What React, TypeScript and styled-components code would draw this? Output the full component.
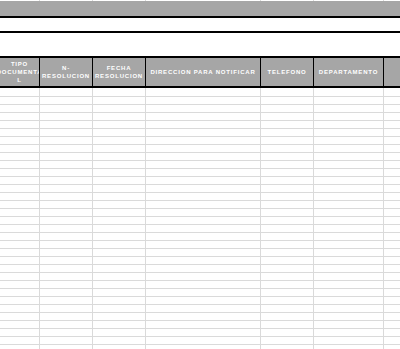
import React from 'react'
import styled, { createGlobalStyle } from 'styled-components'

const GlobalStyle = createGlobalStyle`
  html, body {
    margin: 0;
    padding: 0;
    background: #ffffff;
  }
  body {
    font-family: 'Liberation Sans', Arial, sans-serif;
  }
`

const COLUMNS = '40px 53px 53px 115px 53px 70px 1fr'

const headers: string[][] = [
  ['TIPO', 'DOCUMENTA', 'L'],
  ['N-', 'RESOLUCION'],
  ['FECHA', 'RESOLUCION'],
  ['DIRECCION PARA NOTIFICAR'],
  ['TELEFONO'],
  ['DEPARTAMENTO'],
  [],
]

const Sheet = styled.div`
  width: 400px;
  height: 349px;
  overflow: hidden;
  display: flex;
  flex-direction: column;
`

const GridRow = styled.div<{ $h: number; $first?: boolean }>`
  display: grid;
  grid-template-columns: ${COLUMNS};
  flex: 0 0 ${(p) => p.$h}px;
  height: ${(p) => p.$h}px;
`

const GridCell = styled.div<{ $bottom?: boolean }>`
  box-sizing: border-box;
  border-right: 1px solid #dadada;
  border-bottom: ${(p) => (p.$bottom ? '1px solid #dadada' : 'none')};
  &:last-child {
    border-right: none;
  }
`

const Band = styled.div`
  flex: 0 0 15px;
  background: #a6a6a6;
`

const Rule = styled.div`
  flex: 0 0 2px;
  background: #000000;
`

const Blank = styled.div<{ $h: number }>`
  flex: 0 0 ${(p) => p.$h}px;
  background: #ffffff;
`

const HeaderRow = styled.div`
  display: grid;
  grid-template-columns: ${COLUMNS};
  flex: 0 0 28px;
  background: #a6a6a6;
`

const HeadCell = styled.div`
  box-sizing: border-box;
  border-right: 1px solid #000000;
  overflow: hidden;
  display: flex;
  flex-direction: column;
  align-items: center;
  justify-content: center;
  color: #ffffff;
  font-size: 6px;
  font-weight: 700;
  letter-spacing: 0.8px;
  line-height: 8px;
  &:last-child {
    border-right: none;
  }
`

const HeadLine = styled.span`
  white-space: nowrap;
  display: block;
`

const Body = styled.div`
  flex: 1 1 auto;
  overflow: hidden;
  display: flex;
  flex-direction: column;
`

const ROWS = 34

export default function App() {
  return (
    <>
      <GlobalStyle />
      <Sheet>
        <GridRow $h={1}>
          {headers.map((_, i) => (
            <GridCell key={i} />
          ))}
        </GridRow>
        <Band />
        <Rule />
        <Blank $h={13} />
        <Rule />
        <Blank $h={23} />
        <Rule />
        <HeaderRow>
          {headers.map((lines, i) => (
            <HeadCell key={i}>
              {lines.map((l, j) => (
                <HeadLine key={j}>{l}</HeadLine>
              ))}
            </HeadCell>
          ))}
        </HeaderRow>
        <Rule />
        <Body>
          {Array.from({ length: ROWS }).map((_, r) => (
            <GridRow key={r} $h={r === 0 ? 9 : 8}>
              {headers.map((_, i) => (
                <GridCell key={i} $bottom />
              ))}
            </GridRow>
          ))}
        </Body>
      </Sheet>
    </>
  )
}
